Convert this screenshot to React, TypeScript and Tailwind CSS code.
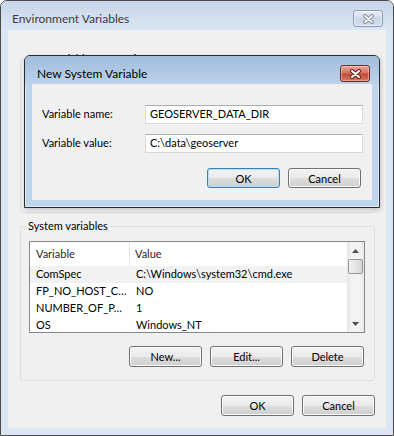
import clsx from "clsx";

type Row = { name: string; value: string };

const rows: Row[] = [
  { name: "ComSpec", value: "C:\\Windows\\system32\\cmd.exe" },
  { name: "FP_NO_HOST_C…", value: "NO" },
  { name: "NUMBER_OF_P…", value: "1" },
  { name: "OS", value: "Windows_NT" },
];

function CloseGlyph({ dim }: { dim?: boolean }) {
  return (
    <svg width="13" height="10" viewBox="0 0 13 10">
      <path
        d="M3 2 L10 8 M10 2 L3 8"
        stroke={dim ? "#7f8a99" : "#5a1f18"}
        strokeWidth="3.8"
        strokeLinecap="round"
        fill="none"
      />
      <path
        d="M3 2 L10 8 M10 2 L3 8"
        stroke={dim ? "#f4f6f9" : "#ffffff"}
        strokeWidth="2"
        strokeLinecap="round"
        fill="none"
      />
    </svg>
  );
}

function WinButton({
  children,
  focused,
  className,
}: {
  children: React.ReactNode;
  focused?: boolean;
  className?: string;
}) {
  return (
    <button
      className={clsx(
        "w-[73px] rounded-[3px] border text-[11px] leading-none text-black bg-[linear-gradient(#f2f2f2,#ebebeb_50%,#dddddd_50%,#cfcfcf)]",
        focused
          ? "border-[#3c7fb1] shadow-[inset_0_0_0_1px_#b5ddf4]"
          : "border-[#707070] shadow-[inset_0_0_0_1px_#fbfbfb]",
        className
      )}
    >
      {children}
    </button>
  );
}

function TextBox({ value }: { value: string }) {
  return (
    <div className="flex h-[19px] w-[218px] items-center border border-[#d5d8df] border-t-[#abadb3] bg-white px-[4px] text-[11px] text-black">
      {value}
    </div>
  );
}

function ScrollArrow({ up }: { up?: boolean }) {
  return (
    <svg width="7" height="4" viewBox="0 0 7 4">
      <polygon
        points={up ? "0,4 3.5,0 7,4" : "0,0 3.5,4 7,0"}
        fill="#4d4d4d"
      />
    </svg>
  );
}

function VariableList() {
  return (
    <div className="flex h-[92px] border border-[#828790] bg-white">
      <div className="flex-1 overflow-hidden">
        <div className="flex h-[24px] items-center text-[11px] text-[#1e1e1e]">
          <div className="flex h-full w-[100px] items-center border-r border-[#e5e5e5] pl-[6px]">
            Variable
          </div>
          <div className="pl-[5px]">Value</div>
        </div>
        {rows.map((r, i) => (
          <div
            key={r.name}
            className={clsx(
              "flex h-[17px] items-center text-[11px] text-black",
              i === 0 && "bg-[#f2f2f2]"
            )}
          >
            <div className="w-[100px] shrink-0 whitespace-nowrap pl-[6px]">
              {r.name}
            </div>
            <div className="whitespace-nowrap pl-[6px]">{r.value}</div>
          </div>
        ))}
      </div>
      <div className="flex w-[17px] flex-col items-center bg-[linear-gradient(90deg,#e6e6e6,#f3f3f3_25%,#f3f3f3_75%,#e9e9e9)]">
        <div className="flex h-[17px] items-center justify-center">
          <ScrollArrow up />
        </div>
        <div className="h-[15px] w-[15px] rounded-[2px] border border-[#979797] bg-[linear-gradient(90deg,#f2f2f2,#e4e4e4_50%,#d6d6d6)]" />
        <div className="flex-1" />
        <div className="flex h-[17px] items-center justify-center">
          <ScrollArrow />
        </div>
      </div>
    </div>
  );
}

function NewVariableDialog() {
  return (
    <div className="absolute left-[23px] top-[54px] flex h-[153px] w-[356px] flex-col rounded-t-[6px] border border-[#2c2c2c] bg-[#bfd5ec] shadow-[inset_0_0_0_1px_rgba(255,255,255,0.45),1px_2px_5px_rgba(0,0,0,0.18)]">
      <div className="flex h-[28px] items-start justify-between rounded-t-[5px] bg-[linear-gradient(180deg,#a1bddc,#b1c9e4_60%,#bdd3ea)] pl-[12px] pr-[9px]">
        <span className="mt-[10px] text-[12px] leading-[16px] text-black">
          New System Variable
        </span>
        <div className="mt-[9px] flex h-[17px] w-[30px] items-center justify-center rounded-[3px] border border-[#6b2a22] bg-[linear-gradient(#e9a99c,#d3705f_45%,#c24a36_55%,#d57a62)] shadow-[inset_0_0_0_1px_rgba(255,255,255,0.35)]">
          <CloseGlyph />
        </div>
      </div>
      <div className="mx-[7px] h-[116px] bg-[#f0f0f0] pt-[21px]">
        <div className="flex items-center pl-[10px]">
          <span className="w-[103px] text-[11px] text-black">Variable name:</span>
          <TextBox value="GEOSERVER_DATA_DIR" />
        </div>
        <div className="mt-[10px] flex items-center pl-[10px]">
          <span className="w-[103px] text-[11px] text-black">Variable value:</span>
          <TextBox value="C:\data\geoserver" />
        </div>
        <div className="mt-[15px] flex justify-end gap-[8px] pr-[11px]">
          <WinButton focused className="h-[20px]">
            OK
          </WinButton>
          <WinButton className="h-[20px]">Cancel</WinButton>
        </div>
      </div>
    </div>
  );
}

export default function App() {
  return (
    <div className="relative h-[436px] w-[394px] overflow-hidden rounded-t-[7px] border border-[#4a4a4a] bg-[#dbe6f3] font-['Lato',sans-serif]">
      <div className="flex h-[29px] items-start justify-between bg-[linear-gradient(180deg,#c5d5e9,#d3e0ef_60%,#dbe6f3)] pl-[11px] pr-[10px]">
        <span className="mt-[10px] text-[12px] leading-[16px] text-[#3b3b3b]">
          Environment Variables
        </span>
        <div className="mt-[9px] flex h-[17px] w-[30px] items-center justify-center rounded-[3px] border border-[#8d9bb0] bg-[linear-gradient(#e3eaf3,#d2dcea_50%,#c8d4e4_50%,#d3dded)] shadow-[inset_0_0_0_1px_rgba(255,255,255,0.5)]">
          <CloseGlyph dim />
        </div>
      </div>

      <div className="mx-[7px] flex h-[398px] flex-col bg-[#f0f0f0] pl-[12px] pr-[11px]">
        <fieldset className="mt-[21px] h-[162px] rounded-[3px] border border-[#d5dfe5]">
          <legend className="ml-[5px] px-[2px] text-[11px] leading-[16px] text-black">
            User variables for Justin
          </legend>
        </fieldset>

        <fieldset className="mt-[5px] h-[163px] rounded-[3px] border border-[#d5dfe5]">
          <legend className="ml-[5px] px-[2px] text-[11px] leading-[16px] text-black">
            System variables
          </legend>
          <div className="pl-[8px] pr-[9px] pt-[7px]">
            <VariableList />
            <div className="mt-[13px] flex justify-end gap-[8px] pr-[1px]">
              <WinButton className="h-[21px]">New...</WinButton>
              <WinButton className="h-[21px]">Edit...</WinButton>
              <WinButton className="h-[21px]">Delete</WinButton>
            </div>
          </div>
        </fieldset>

        <div className="mt-[14px] flex justify-end gap-[8px]">
          <WinButton className="h-[21px]">OK</WinButton>
          <WinButton className="h-[21px]">Cancel</WinButton>
        </div>
      </div>

      <NewVariableDialog />
    </div>
  );
}
